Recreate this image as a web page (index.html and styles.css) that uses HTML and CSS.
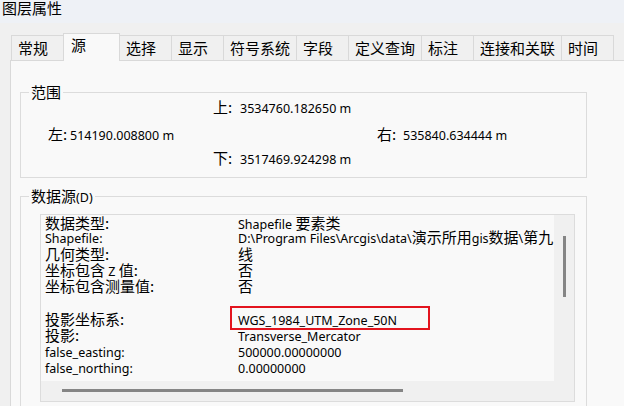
FILE: index.html
```html
<!DOCTYPE html>
<html lang="zh-CN">
<head>
<meta charset="utf-8">
<title>图层属性</title>
<link rel="stylesheet" href="styles.css">
</head>
<body>
<div class="titlebar">图层属性</div>
<div class="tabs">
  <div class="tab">常规</div>
  <div class="tab active">源</div>
  <div class="tab">选择</div>
  <div class="tab">显示</div>
  <div class="tab">符号系统</div>
  <div class="tab">字段</div>
  <div class="tab">定义查询</div>
  <div class="tab">标注</div>
  <div class="tab">连接和关联</div>
  <div class="tab">时间</div>
</div>
<div class="panel">
  <fieldset class="group extent">
    <legend class="zh">范围</legend>
    <div class="extent-grid">
      <div class="ext top"><span class="lbl zh">上:</span>3534760.182650 m</div>
      <div class="ext left"><span class="lbl narrow zh">左:</span>514190.008800 m</div>
      <div class="ext right"><span class="lbl zh">右:</span>535840.634444 m</div>
      <div class="ext bottom"><span class="lbl zh">下:</span>3517469.924298 m</div>
    </div>
  </fieldset>
  <fieldset class="group source">
    <legend><span class="zh">数据源</span>(D)</legend>
    <div class="listbox">
      <div class="viewport">
        <div class="props">
          <div class="first"><span class="zh">数据类型:</span></div><div class="first">Shapefile <span class="zh">要素类</span></div>
          <div>Shapefile:</div><div>D:\Program Files\Arcgis\data\<span class="zh">演示所用</span>gis<span class="zh">数据</span>\<span class="zh">第九</span></div>
          <div><span class="zh">几何类型:</span></div><div><span class="zh">线</span></div>
          <div><span class="zh">坐标包含</span> Z <span class="zh">值:</span></div><div><span class="zh">否</span></div>
          <div><span class="zh">坐标包含测量值:</span></div><div><span class="zh">否</span></div>
          <div>&nbsp;</div><div>&nbsp;</div>
          <div><span class="zh">投影坐标系:</span></div><div>WGS_1984_UTM_Zone_50N</div>
          <div><span class="zh">投影:</span></div><div>Transverse_Mercator</div>
          <div>false_easting:</div><div>500000.00000000</div>
          <div>false_northing:</div><div>0.00000000</div>
        </div>
      </div>
      <div class="vscroll"><div class="vthumb"></div></div>
      <div class="hscroll"><div class="hthumb"></div></div>
      <div class="corner"></div>
      <div class="highlight"></div>
    </div>
  </fieldset>
</div>
</body>
</html>
```
FILE: styles.css
```css
html, body {
  margin: 0;
  padding: 0;
}
body {
  width: 624px;
  height: 406px;
  overflow: hidden;
  background: #f0f0f0;
  color: #000;
  font-family: "Noto Sans", "Noto Sans CJK SC", sans-serif;
  font-size: 12.5px;
}
.zh {
  font-family: "Noto Sans CJK SC", sans-serif;
  font-size: 15px;
  line-height: 1;
}
.titlebar {
  height: 23px;
  box-sizing: border-box;
  background: #eef1f6;
  padding-left: 2px;
  font-family: "Noto Sans CJK SC", sans-serif;
  font-size: 15px;
  line-height: 16px;
}
.tabs {
  display: flex;
  align-items: flex-end;
  height: 25px;
  margin-top: 12px;
  padding-left: 11px;
}
.tab {
  box-sizing: border-box;
  height: 25px;
  min-width: 53px;
  padding: 0 6px;
  margin-right: -1px;
  border: 1px solid #d9d9d9;
  border-bottom: none;
  background: #f0f0f0;
  font-family: "Noto Sans CJK SC", sans-serif;
  font-size: 15px;
  line-height: 23px;
  white-space: nowrap;
}
.tab.active {
  position: relative;
  z-index: 1;
  height: 28px;
  min-width: 57px;
  padding-left: 7px;
  margin-bottom: -1px;
  background: #f9f9f9;
  line-height: 22px;
}
.panel {
  margin-left: 10px;
  width: 640px;
  height: 400px;
  border: 1px solid #d9d9d9;
  background: #f9f9f9;
}
.group {
  box-sizing: border-box;
  width: 567px;
  margin: 0 0 0 9px;
  padding: 0;
  border: 1px solid #dcdcdc;
}
.group legend {
  margin-left: 8px;
  padding: 0 2px;
  line-height: 14px;
}
.extent {
  margin-top: 24px;
  padding-bottom: 13px;
}
.extent-grid {
  display: grid;
  grid-template-columns: 165px 164px auto;
  grid-template-rows: 27px 24px 14px;
  padding-left: 27px;
  line-height: 14px;
  white-space: nowrap;
}
.lbl {
  display: inline-block;
  width: 27px;
}
.lbl.narrow {
  width: 22px;
}
.ext.top { grid-column: 2; grid-row: 1; }
.ext.left { grid-column: 1; grid-row: 2; }
.ext.right { grid-column: 3; grid-row: 2; }
.ext.right .lbl { width: 26px; }
.ext.bottom { grid-column: 2; grid-row: 3; }
.source {
  margin-top: 10px;
  padding-bottom: 20px;
}
.listbox {
  position: relative;
  box-sizing: border-box;
  width: 535px;
  height: 188px;
  margin: 9px 0 0 19px;
  border: 1px solid #dcdcdc;
  background: #f9f9f9;
  display: grid;
  grid-template-columns: minmax(0, 1fr) 20px;
  grid-template-rows: minmax(0, 1fr) 20px;
}
.viewport {
  overflow: hidden;
  min-height: 0;
  min-width: 0;
}
.props {
  display: grid;
  grid-template-columns: 193px max-content;
  padding-left: 4px;
  line-height: 16.25px;
  white-space: nowrap;
}
.props .first {
  padding-top: 2px;
  margin-bottom: -2px;
}
.props .zh {
  line-height: 0;
}
.vscroll {
  background: #f0f0f0;
}
.vthumb {
  margin: 21px 0 0 9px;
  width: 3px;
  height: 61px;
  background: #858585;
}
.hscroll {
  background: #f0f0f0;
  overflow: hidden;
}
.hthumb {
  margin: 8px 0 0 21px;
  width: 341px;
  height: 3px;
  background: #858585;
}
.corner {
  background: #f0f0f0;
}
.highlight {
  position: absolute;
  left: 189px;
  top: 91px;
  width: 200px;
  height: 24px;
  box-sizing: border-box;
  border: 2px solid #e3141e;
}
```
